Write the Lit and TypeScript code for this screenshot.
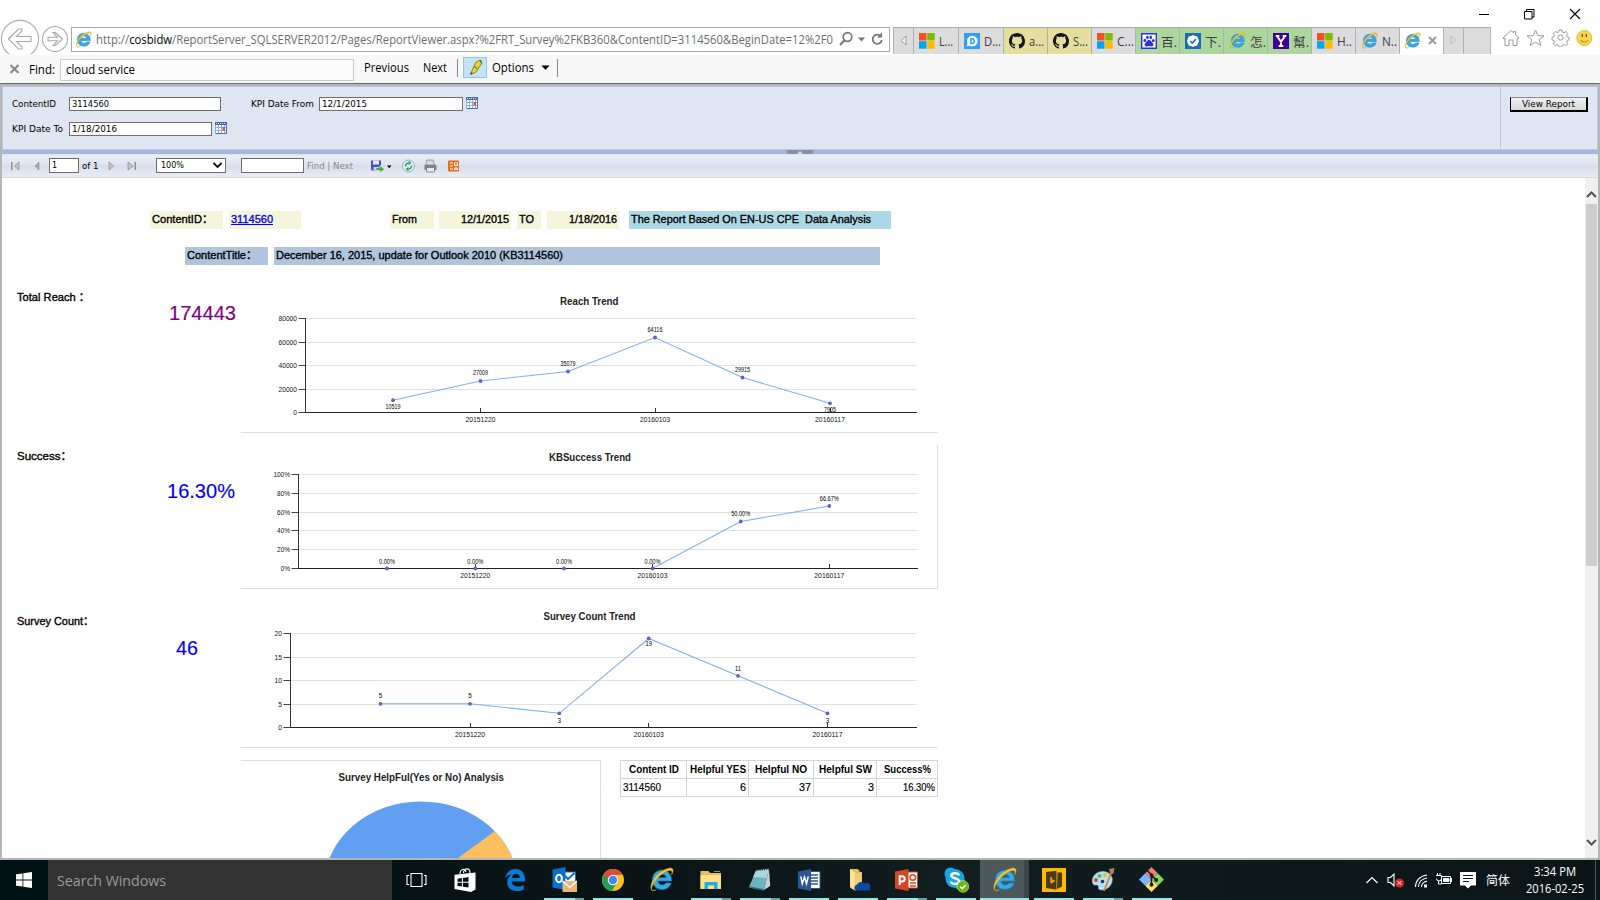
import { LitElement, html, css, svg, nothing } from "lit";
import { customElement, property } from "lit/decorators.js";

/** Single line of text squeezed or stretched to an exact width. */
@customElement("fit-text")
class FitText extends LitElement {
  @property({ type: Number }) w = 0;
  static styles = css`
    :host { display: inline-block; white-space: pre; flex: none; }
    .in { display: inline-block; transform-origin: left center; text-decoration: inherit; }
  `;
  firstUpdated() {
    const s = this.renderRoot.querySelector(".in") as HTMLElement;
    const real = s.getBoundingClientRect().width;
    this.style.width = this.w + "px";
    if (real) s.style.transform = `scaleX(${this.w / real})`;
  }
  render() { return html`<span class="in"><slot></slot></span>`; }
}

const T = (text: unknown, w: number, cls = "") => html`<fit-text class=${cls} .w=${w}>${text}</fit-text>`;

/* ---------- icons ---------- */
const ieGlyph = (s: number) => html`<svg width=${s} height=${s} viewBox="0 0 24 24">
  <path d="M21.5 13.4H8.6c.2 2.4 1.8 3.9 4.1 3.9 1.7 0 2.8-.6 3.5-1.9h5c-1.200 3.900-4.300 6.100-8.600 6.100-5.600 0-9.300-3.700-9.300-9.100 0-5.500 3.800-9.300 9.200-9.300 5.800 0 9.300 4 9 10.300zM16.500 10.200c-.2-2-1.700-3.300-3.900-3.300-2.100 0-3.600 1.300-3.900 3.300z" fill="#35a8e6" stroke="#1c7fc4" stroke-width=".7"/>
  <path d="M3.300 22.800C-.5 20.500 3 11.500 9.500 6.200 15 1.600 21.500-.6 22.900 2.200c.6 1.300 0 3.300-1.200 5.300.5-1.900.5-3.200-.3-3.800-1.700-1.300-6.800.9-11.200 4.900-5.200 4.700-8.400 10.700-7.400 12.900.5 1.100 2.200 1 4.400.1-1.700 1.200-3.200 1.500-3.900 1.200z" fill="#f8c62a" stroke="#d99f12" stroke-width=".4"/></svg>`;
const msGlyph = html`<svg width="16" height="16"><path fill="#f25022" d="M0 0h7.500v7.500H0z"/><path fill="#7fba00" d="M8.200 0h7.500v7.500H8.200z"/><path fill="#00a4ef" d="M0 8.200h7.500v7.500H0z"/><path fill="#ffb900" d="M8.200 8.200h7.500v7.500H8.200z"/></svg>`;
const ghGlyph = html`<svg width="16" height="16" viewBox="0 0 16 16"><path fill="#151515" d="M8 0C3.580 0 0 3.580 0 8c0 3.540 2.290 6.530 5.470 7.590.4.070.550-.170.550-.380 0-.190-.010-.820-.010-1.490-2.010.370-2.530-.490-2.690-.940-.090-.230-.480-.940-.820-1.130-.280-.150-.680-.520-.010-.530.630-.010 1.080.580 1.230.820.720 1.210 1.870.870 2.330.660.070-.520.280-.870.510-1.070-1.780-.2-3.640-.890-3.640-3.950 0-.870.310-1.590.820-2.150-.080-.2-.360-1.020.080-2.120 0 0 .670-.210 2.200.820.640-.180 1.320-.270 2-.270s1.360.090 2 .270c1.530-1.040 2.200-.820 2.200-.820.440 1.100.160 1.920.080 2.120.510.560.820 1.270.820 2.150 0 3.070-1.870 3.750-3.650 3.950.290.250.540.730.540 1.480 0 1.070-.010 1.930-.010 2.200 0 .210.150.460.550.380A8.010 8.010 0 0 0 16 8c0-4.420-3.580-8-8-8z"/></svg>`;
const disqusGlyph = html`<svg width="16" height="16"><path fill="#2e9fff" d="M0 0h16v16H0z"/><path fill="#fff" d="M8.300 2.800a5.300 5.300 0 1 1-2.600 9.900L2.500 13.300l1-2.900a5.300 5.300 0 0 1 4.800-7.600z"/><path fill="none" stroke="#2e9fff" stroke-width="1.500" d="M6.900 5.800v4.600h1.200a2.300 2.300 0 0 0 0-4.600z"/></svg>`;
const baiduGlyph = html`<svg width="16" height="16"><path fill="#fff" stroke="#2932e1" stroke-width="1.400" d="M.7.7h14.600v14.600H.7z"/><g fill="#2932e1"><ellipse cx="3.800" cy="7.400" rx="1.400" ry="1.700"/><ellipse cx="6.400" cy="4.400" rx="1.300" ry="1.800"/><ellipse cx="9.800" cy="4.400" rx="1.300" ry="1.800"/><ellipse cx="12.300" cy="7.600" rx="1.400" ry="1.700"/><path d="M8 7c1.900 0 2.500 2 3.700 3 1.300 1.200.8 3.400-1 3.400-1 0-1.600-.3-2.700-.3s-1.700.3-2.700.3c-1.800 0-2.300-2.200-1-3.400C5.500 9 6.100 7 8 7z"/></g></svg>`;
const checkGlyph = html`<svg width="16" height="16"><path fill="#1d6fb5" d="M0 0h16v16H0z"/><path fill="#fff" d="M8 2l1.800 1.100 2.100.1 1 1.900L14 8l-1.100 2.900-1 1.900-2.100.1L8 14l-1.800-1.100-2.100-.1-1-1.900L2 8l1.100-2.900 1-1.900 2.100-.1z"/><path d="M5.200 8l2.100 2.100 3.700-4" fill="none" stroke="#1d6fb5" stroke-width="1.700"/></svg>`;
const yahooGlyph = html`<svg width="16" height="16"><path fill="#3f0099" d="M0 0h16v16H0z"/><path fill="none" stroke="#fff" stroke-width="1.900" d="M4 3l4 5.800L12 3M8 8.500V13M2.700 3h3.600M9.700 3h3.600M5.700 13h4.600"/></svg>`;

const calGlyph = html`<svg width="12" height="12"><path fill="#fff" d="M0 0h12v12H0z"/><path fill="#3f6cb8" d="M0 0h12v3H0z"/><path stroke="#8fade0" d="M.5 3v9M3.500 3v8M6.500 3v8M9.500 3v8M1 5.500h10M1 8.500h10"/><path fill="#e0502c" d="M7.500 5h2.500v3.500H7.500z"/><path stroke="#3f6cb8" d="M11.500 2v10M1 11.500h10"/><path stroke="#dfe8f8" stroke-dasharray="1 1" d="M1 1.500h10"/></svg>`;

const TABS: { w: number; c: string; icon: unknown; t: string; tw: number }[] = [
  { w: 45.400, c: "gray", icon: msGlyph, t: "L...", tw: 14 },
  { w: 44.800, c: "gray", icon: disqusGlyph, t: "D...", tw: 17 },
  { w: 44.100, c: "gold", icon: ghGlyph, t: "a...", tw: 15 },
  { w: 44.100, c: "gold", icon: ghGlyph, t: "S...", tw: 15 },
  { w: 44.100, c: "gray", icon: msGlyph, t: "C...", tw: 17 },
  { w: 44, c: "green", icon: baiduGlyph, t: "百.", tw: 16 },
  { w: 43.900, c: "green", icon: checkGlyph, t: "下.", tw: 16 },
  { w: 44, c: "green", icon: ieGlyph(17), t: "怎.", tw: 16 },
  { w: 44, c: "green", icon: yahooGlyph, t: "幫.", tw: 16 },
  { w: 44, c: "gray", icon: msGlyph, t: "H..", tw: 15 },
  { w: 43.500, c: "gray", icon: ieGlyph(17), t: "N..", tw: 15 },
];

/* ---------- line chart ---------- */
interface ChartSpec {
  y0: number; h: number; title: string; tx: number; tw: number; ty: number;
  ax: number; top: number; bottom: number; right: number;
  yl: string[]; yw: number; pts: [number, number][];
  lab: [string, number, number][]; side?: boolean;
}
const DATES = ["20151220", "20160103", "20160117"];

@customElement("trend-chart")
class TrendChart extends LitElement {
  @property({ attribute: false }) spec!: ChartSpec;
  static styles = css`
    :host { display: block; flex: none; -webkit-text-stroke: 0; }
    svg { display: block; font-family: "Liberation Sans", Arial, sans-serif; font-weight: normal; }
    .title { font-size: 10.5px; font-weight: bold; fill: #222; }
    .ax { font-size: 7.5px; fill: #111; }
    .lb { font-size: 6.5px; fill: #000; }
  `;
  render() {
    const s = this.spec;
    const n = s.yl.length - 1;
    const by = s.y0 + s.h - 0.5;
    return html`<svg width="697" height=${s.h} viewBox=${`241 ${s.y0} 697 ${s.h}`}>
      <path d=${`M241 ${by}H937.500${s.side ? `V${s.y0}` : ""}`} fill="none" stroke="#dedede"/>
      <text class="title" x=${s.tx} y=${s.ty + 3.200} textLength=${s.tw} lengthAdjust="spacingAndGlyphs">${s.title}</text>
      ${s.yl.map((l, i) => {
        const y = Math.round(s.top + ((s.bottom - s.top) * i) / n) + 0.5;
        const w = l.length * s.yw + (l.endsWith("%") ? 1.800 : 0);
        return svg`${i < n ? svg`<path d=${`M${s.ax} ${y}H${s.right}`} stroke="#e2e2e2"/>` : nothing}
          <path d=${`M${s.ax - 7} ${y}H${s.ax}`} stroke="#444"/>
          <text class="ax" x=${s.ax - 8.500 - w} y=${y + 2.200} textLength=${w} lengthAdjust="spacingAndGlyphs">${l}</text>`;
      })}
      <path d=${`M${s.ax} ${Math.round(s.top)}V${Math.round(s.bottom) + 1}`} stroke="#333"/>
      <polyline points=${s.pts.map((p) => p.join(",")).join(" ")} fill="none" stroke="#7db1f5" stroke-width="1.100"/>
      <path d=${`M${s.ax} ${Math.round(s.bottom) + 0.500}H${s.right}`} stroke="#222"/>
      ${DATES.map((d, i) => {
        const x = s.pts[i * 2 + 1][0];
        return svg`<path d=${`M${Math.floor(x) + 0.500} ${s.bottom - 4}v4`} stroke="#333"/>
          <text class="ax" x=${x - 15} y=${s.bottom + 10.400} textLength="30" lengthAdjust="spacingAndGlyphs">${d}</text>`;
      })}
      ${s.pts.map((p) => svg`<circle cx=${p[0]} cy=${p[1]} r="1.900" fill="#6a5acd"/>`)}
      ${s.lab.map(([t, y, w], i) => svg`<text class="lb" x=${s.pts[i][0] - w / 2} y=${y + 2.200} textLength=${w} lengthAdjust="spacingAndGlyphs">${t}</text>`)}
    </svg>`;
  }
}

const REACH: ChartSpec = {
  y0: 265, h: 168, title: "Reach Trend", tx: 560, tw: 58.500, ty: 301.500,
  ax: 305.500, top: 318, bottom: 412, right: 917,
  yl: ["80000", "60000", "40000", "20000", "0"], yw: 3.700,
  pts: [[393, 400.200], [480.500, 381], [568, 371.500], [655, 337.500], [742.500, 377.500], [830, 403.300]],
  lab: [["10519", 407, 15], ["27009", 373, 15], ["35079", 364, 15], ["64116", 329.500, 15], ["29915", 370, 15], ["7905", 410, 12]],
};
const SUCCESS: ChartSpec = {
  y0: 445, h: 144, title: "KBSuccess Trend", tx: 549, tw: 82, ty: 457.500,
  ax: 298.500, top: 474, bottom: 568, right: 918, side: true,
  yl: ["100%", "80%", "60%", "40%", "20%", "0%"], yw: 3.700,
  pts: [[387, 568.500], [475.300, 568.500], [564, 568.500], [652.500, 568.500], [740.700, 521.500], [829.300, 506]],
  lab: [["0.00%", 561.500, 16], ["0.00%", 561.500, 16], ["0.00%", 561.500, 16], ["0.00%", 561.500, 16], ["50.00%", 514, 19], ["66.67%", 498.500, 19]],
};
const COUNT: ChartSpec = {
  y0: 600, h: 148, title: "Survey Count Trend", tx: 543.500, tw: 92, ty: 616.500,
  ax: 290.500, top: 633, bottom: 727, right: 917,
  yl: ["20", "15", "10", "5", "0"], yw: 3.700,
  pts: [[380.500, 703.800], [470, 703.800], [559.300, 713.300], [648.700, 638.500], [738, 675.800], [827.500, 713.300]],
  lab: [["5", 696, 3.500], ["5", 696, 3.500], ["3", 720.500, 3.500], ["19", 644, 6.500], ["11", 668.500, 6], ["3", 721, 3.500]],
};

/* ---------- taskbar ---------- */
const g = (body: unknown, s = 24) => html`<svg width=${s} height=${s} viewBox="0 0 24 24">${body}</svg>`;
const winPath = "M0 2.300L6.500 1.400V7.600H0zM7.300 1.300L16 0V7.600H7.300zM0 8.400H6.500V14.600L0 13.700zM7.300 8.400H16V16L7.300 14.700z";
const APPS: { i: unknown; u?: string; active?: boolean }[] = [
  { i: g(svg`<path d="M6 5.500h11v13h-11zM4 7.500h-2v9h2M19 7.500h2v9h-2" fill="none" stroke="#fff" stroke-width="1.100"/>`) },
  { i: g(svg`<path d="M6 6C6 1 11-.5 12 4M9.500 5C10-.5 16-.5 16 5" fill="none" stroke="#fff" stroke-width="1.100"/><path d="M.5 6.700L21.500 4.500V21.500L17 24 .5 21z" fill="#fff"/><path d="M3.500 10.700l4.400-.7v3.800H3.500zM8.900 9.900l5.600-.8v4.700H8.900zM3.500 14.800h4.400v3.800l-4.400-.6zM8.900 14.800h5.600v4.700l-5.600-.8z" fill="#071214"/>`) },
  { i: g(svg`<path d="M2 10.800C2.700 5 7 1 12.400 1 18.600 1 22 5.600 22 11.300v2.300H8.800c.2 3.500 2.900 5 6 5 2.200 0 4.200-.6 5.900-1.700v4.600c-1.900 1-4.200 1.500-6.900 1.500-5.700 0-9.600-3.400-9.600-8.600 0-3.300 1.700-6.200 4.500-7.800C5 6.800 3.300 8.400 2 10.800zM8.900 9.900h8c-.1-2.600-1.600-4-3.900-4-2.100 0-3.700 1.500-4.100 4z" fill="#0a79d8"/>`) },
  { u: "multi", i: html`<svg width="27" height="26" viewBox="-2.500 0 27 26"><path d="M9 5h14v12H9z" fill="#fff" stroke="#0f6cbd"/><path d="M11.500 8l4 4 6.500-6" fill="none" stroke="#0f6cbd" stroke-width="2"/><path d="M0 2.500L13 0v23L0 20.500z" fill="#0a70c8"/><ellipse cx="6.500" cy="11.500" rx="2.900" ry="3.700" fill="none" stroke="#fff" stroke-width="2"/><path d="M10 14h14.500v11H10z" fill="#e9b878"/><path d="M10 14l7.200 6.500L24.500 14" fill="none" stroke="#fff" stroke-width="1.300"/></svg>` },
  { u: "one", i: g(svg`<circle cx="12" cy="12" r="11" fill="#fbc116"/><path d="M12 12L2.500 6.500A11 11 0 0 1 21.600 6.700L12 7z" fill="#dd4b3e"/><path d="M2.500 6.500A11 11 0 0 0 11 23l5-8.500L8 15z" fill="#2a9d55"/><path d="M2.500 6.500L8 15l4-8z" fill="#dd4b3e"/><path d="M2.500 6.500l5.200 8.800 2 .5-3-6z" fill="#2a9d55"/><circle cx="12" cy="12" r="5.200" fill="#fff"/><circle cx="12" cy="12" r="4.200" fill="#4486f4"/>`) },
  { i: ieGlyph(25) },
  { u: "multi", i: g(svg`<path d="M1.500 3h8l1.500 2h11v16h-20.500z" fill="#e8c052"/><path d="M1.500 7h20.500v14h-20.500z" fill="#ffe08a"/><path d="M5.500 21v-7h13v7h-3.500v-3.500h-6V21z" fill="#20aee8"/><path d="M15 3.500h6" stroke="#49a0dd"/>`) },
  { u: "multi", i: g(svg`<path d="M8 2.500L21 1 16 22 1 19z" fill="#6fb2bf"/><path d="M8 2.500L21 1 18.500 10 5 9z" fill="#a9d6dd"/><path d="M21 1l1.200 17L16 22z" fill="#c9d2d3"/><path d="M8 2.500L21 1" stroke="#3f5b60" stroke-width="1.600" stroke-dasharray="1 1"/><path d="M1 19l15 3" stroke="#356a75" stroke-width="1.300"/>`) },
  { u: "one", i: g(svg`<path d="M12 3.500h11v17H12z" fill="#fff" stroke="#2b579a"/><path d="M14 7h7M14 10h7M14 13h7M14 16h7" stroke="#2b579a" stroke-width="1.300"/><path d="M1 3.500L14 1v22L1 20.500z" fill="#2b579a"/><path d="M3.800 8.500l1.500 7.200L7.500 9l2 6.700L11.300 8.500" fill="none" stroke="#fff" stroke-width="1.500"/>`) },
  { u: "one", i: g(svg`<path d="M4 1h8l2 3h2v17H6L4 19z" fill="#e3bc56"/><path d="M4 1l5.500 4v18L4 19z" fill="#fbe39a"/><path d="M9.500 5h6v16h-6z" fill="#efd077"/><path d="M9.500 22.500a3.500 3.500 0 0 1 1.500-6 4.500 4.500 0 0 1 7.500-1 4 4 0 0 1 4.500 7z" fill="#0c4a9c"/>`) },
  { u: "multi", i: g(svg`<path d="M12 4h10.500v16H12z" fill="#fff" stroke="#d24726"/><path d="M15 15h6M15 18h6" stroke="#d24726" stroke-width="1.300"/><circle cx="17.800" cy="9.500" r="2.800" fill="none" stroke="#d24726" stroke-width="1.500"/><path d="M0 3.500L13.500 1v22L0 20.500z" fill="#d24726"/><path d="M4.700 17V8.200h2.500a2.400 2.400 0 0 1 0 5.200H4.700" fill="none" stroke="#fff" stroke-width="2"/>`) },
  { u: "one", i: html`<svg width="26" height="26" viewBox="-1 0 26 26"><circle cx="6.500" cy="6.500" r="6" fill="#14a8e8"/><circle cx="15.500" cy="16.500" r="6" fill="#14a8e8"/><circle cx="11" cy="11.500" r="9.500" fill="#14a8e8"/><path d="M15 8.300C14 5.500 7.300 5.300 7.300 8.600c0 3.600 7.900 1.900 7.900 5.700 0 3.700-7.500 3.400-8.500.2" fill="none" stroke="#fff" stroke-width="2.500"/><circle cx="19" cy="19.500" r="5.800" fill="#6bb700" stroke="#d8efc0" stroke-width=".6"/><path d="M16.300 19.600l2 2 3.400-3.700" fill="none" stroke="#fff" stroke-width="1.500"/></svg>` },
  { u: "full", active: true, i: ieGlyph(25) },
  { u: "one", i: g(svg`<path d="M0 0h24v24H0z" fill="#ffb900"/><path d="M4 4l10.500-1.300v19L4 20z" fill="#4a3a1a"/><path d="M15.500 4.500h4.500v14l-5 2.500z" fill="#4a3a1a"/><path d="M9 9v6M9 11.500l3 1.500-3 2" fill="none" stroke="#ffb900" stroke-width="1.300"/>`) },
  { u: "multi", i: g(svg`<path d="M2 16C-1 9 6 2.500 13 3.500c8 1 10 8 7 13-2 3.500-5 5-9 5.500-2.500.2-4-1-3.500-2.500.5-2-1-2.700-2.500-2.500-1.500.2-2.500 0-3-1z" fill="#b9dff2" stroke="#7fb2d0" stroke-width=".6"/><circle cx="5" cy="12" r="1.900" fill="#e23b30"/><circle cx="8.500" cy="8" r="2" fill="#64b443"/><circle cx="14" cy="7" r="2" fill="#f4b92d"/><circle cx="11.500" cy="13.500" r="1.800" fill="#103a66"/><path d="M20.500 4L13 23" stroke="#d9823a" stroke-width="1.700"/><path d="M18 1l5.500-1-1 5.500-3 1z" fill="#b58354"/>`) },
  { u: "one", i: g(svg`<path d="M12 0l6 6-6 6-6-6z" fill="#f27d7d"/><path d="M6 6l6 6-6 6-6-6z" fill="#80b2ff"/><path d="M18 6l6 6-6 6-6-6z" fill="#85d45c"/><path d="M12 12l6 6-6 6-6-6z" fill="#ffe26b"/><path d="M8 3.500l4 4v10M12 8l4.500 4.500" stroke="#1a1a1a" stroke-width="1.500" fill="none"/><circle cx="12" cy="7.700" r="1.800" fill="#1a1a1a"/><circle cx="16.500" cy="12.500" r="1.900" fill="#1a1a1a"/><circle cx="12" cy="17" r="1.900" fill="#1a1a1a"/>`, 25) },
];

@customElement("app-root")
class AppRoot extends LitElement {
  static styles = css`
    * { box-sizing: border-box; }
    :host { display: flex; flex-direction: column; width: 1600px; height: 900px; overflow: hidden; background: #fff;
      font-family: "Open Sans", "Noto Sans CJK SC", sans-serif; color: #000; }
    svg { display: block; flex: none; }
    .wctl { height: 27px; display: flex; justify-content: flex-end; align-items: flex-start; padding: 8px 19px 0 0; gap: 34px; flex: none; }
    .nav { height: 28px; display: flex; align-items: flex-start; flex: none; }
    .btns { width: 71px; height: 27px; position: relative; overflow: visible; }
    .btns svg { position: absolute; left: 0; top: -8px; }
    .addr { width: 819px; height: 25px; border: 1px solid #aaa; display: flex; align-items: center; padding-left: 3px; font-size: 13px; line-height: 18px; color: #6d6d6d; }
    .addr fit-text { margin-left: 4px; margin-top: -2px; }
    .addr > svg { margin-top: -1px; }
    .addr b { font-weight: 400; color: #000; }
    .addr .tools { margin-left: 6px; }
    .tabs { display: flex; margin-left: 3px; height: 27px; border-top: 1px solid #aaa; border-right: 1px solid #b5b5b5; font-size: 12.5px; color: #3c3c3c; }
    .tab { border-left: 1px solid #b0b0b0; background: #dcdcdc; display: flex; align-items: center; padding-left: 4.500px; gap: 4.500px; flex: none; }
    .gold { background: #e4dd9d; } .green { background: #abd69c; } .act { background: #fff; gap: 7px; }
    .arr { padding-left: 6px; }
    .tab > svg { margin-top: -1px; }
    .tab.s1 { width: 20px; } .tab.s2 { width: 44px; } .tab.s3 { width: 20px; } .tab.s4 { width: 27px; }
    .navicons { margin: 2px 0 0 11px; }
    .find { height: 28px; background: #f7f7f7; display: flex; align-items: center; font-size: 12px; flex: none; padding-left: 9px; }
    .fin { width: 294px; height: 22px; border: 1px solid #ccc; background: #fcfcfc; margin-left: 5px; padding: 1px 0 0 5px; line-height: 18px; margin-top: 1px; }
    .ml11 { margin-left: 10px; } .ml9 { margin-left: 9px; } .ml14 { margin-left: 14px; } .ml7 { margin-left: 7px; } .up { margin-top: -3px; }
    .vs { width: 1px; height: 18px; background: #888; }
    .hl { width: 24px; height: 21px; border: 1px solid #8cc6f2; background: #c6e2f7; margin: -3px 5px 0 5px; display: flex; justify-content: center; align-items: center; }
    .frame { flex: 1; min-height: 0; display: flex; flex-direction: column; border: 2px solid #b5b5b5; border-top: 0; }
    .l1 { height: 1px; background: #6e6e6e; margin: 0 -2px; flex: none; } .l2 { height: 2px; background: #b5b5b5; flex: none; }
    .params { height: 64px; background: #dfe6f2; border: 1px solid #b8cbe6; display: flex; font-family: "DejaVu Sans", sans-serif; font-size: 8px; flex: none; }
    .pl { flex: 1; padding: 10px 0 0 9px; display: flex; flex-direction: column; gap: 10px; border-right: 1px solid #b8cbe6; }
    .pr { width: 96px; padding: 10px 0 0 9px; }
    .prow { display: flex; align-items: flex-start; height: 14px; }
    .prow.two { padding-top: 1px; }
    .prow > fit-text { line-height: 15px; }
    .pin { height: 14px; border: 1px solid #6e6e6e; background: #fff; line-height: 13px; padding-left: 2px; flex: none; }
    .p1 { width: 152px; margin-left: 13px; } .p2 { width: 144px; margin-left: 5px; } .p3 { width: 143px; margin-left: 6px; }
    .cal { margin-left: 3px; } .kf { margin-left: 30px; }
    .vbtn { width: 78px; height: 15px; border: 1px solid #8c8c8c; border-right: 2px solid #000; border-bottom: 2px solid #000; border-left-color: #000; background: linear-gradient(#f0f0f0, #d8d8d8); display: flex; justify-content: center; align-items: center; line-height: 11px; }
    .split { height: 4px; background: #a5b6d9; display: flex; justify-content: center; flex: none; }
    .grip { width: 26px; height: 4px; background: #8791a3; display: flex; justify-content: center; align-items: center; }
    .tb { height: 24px; border-top: 1px solid #dfe5f1; border-bottom: 1px solid #d5d8e0; background: linear-gradient(#eaedf7, #dfe4f0 45%, #d7ddeb 46%, #e9ecf6); display: flex; align-items: center; font-family: "DejaVu Sans", sans-serif; font-size: 8px; padding-left: 9px; flex: none; }
    .tb > svg { margin-top: -1px; }
    .tin { height: 15px; border: 1px solid #6e6e6e; background: #fff; line-height: 14px; flex: none; padding-left: 2px; margin-top: -1px; }
    .i1 { width: 30px; margin-left: 9px; } .i2 { width: 63px; margin-left: 15px; }
    .sel { width: 70px; margin-left: 18.500px; display: flex; align-items: center; justify-content: space-between; padding: 0 2px 0 4px; }
    .of { margin-left: 3px; } .gray { color: #888; } .tab.gray { color: inherit; }
    .fn { margin-left: 3px; }
    .body { flex: 1; min-height: 0; display: flex; }
    .rep { flex: 1; min-width: 0; overflow: hidden; display: flex; flex-direction: column; font-family: "Liberation Sans", "Noto Sans CJK SC", Arial, sans-serif; font-size: 11px; color: #000; -webkit-text-stroke: .35px; }
    .sb { width: 13px; background: #f0f0f0; display: flex; flex-direction: column; align-items: center; padding: 13px 0 12px; justify-content: space-between; flex: none; }
    .thumb { width: 11px; height: 362px; background: #cdcdcd; margin-top: 6px; margin-bottom: auto; }
    .r { display: flex; height: 18px; flex: none; }
    .r1 { margin: 33px 0 0 148px; } .r2 { margin: 18px 0 0 183px; }
    .cell { line-height: 17px; padding: 0 2px; background: #f5f5dc; display: flex; flex: none; white-space: nowrap; }
    .end { justify-content: flex-end; } .lb { background: #add8e6; } .st { background: #b0c4de; }
    .link { color: #00f; }
    .u1 { text-decoration: underline; }
    .c73 { width: 73px; } .c72 { width: 72px; margin-left: 6px; } .cf { width: 44px; margin-left: 89px; } .cd { width: 72px; margin-left: 5px; }
    .ct { width: 24px; margin-left: 6px; } .cd2 { width: 72px; margin-left: 6px; } .cr { width: 262px; margin-left: 10px; }
    .c83 { width: 83px; } .c606 { width: 606px; margin-left: 6px; }
    .sec { display: flex; flex: none; } .sec.b { margin-top: 12px; } .sec.c { margin-top: 11px; }
    .lab { width: 150px; padding-left: 15px; flex: none; line-height: 14px; }
    .num { width: 89px; flex: none; font-size: 21px; color: #00f; line-height: 24px; -webkit-text-stroke: .15px; }
    .purple { color: purple; }
    .o1 .lab { padding-top: 25px; } .o1 .num { padding: 36px 0 0 17px; }
    .o2 .lab { padding-top: 4px; } .o2 .num { padding: 34px 0 0 15px; }
    .o3 .lab { padding-top: 14px; } .o3 .num { padding: 36px 0 0 24px; }
    .last { display: flex; margin: 12px 0 0 239px; flex: none; }
    .pie { width: 360px; height: 120px; border: 1px solid #dedede; border-width: 1px 1px 0 0; -webkit-text-stroke: 0; }
    .pt { font-size: 10.500px; font-weight: bold; fill: #222; }
    .grid { margin-left: 19px; width: 318px; height: 37px; display: grid; grid-template-columns: 66px 62px 65px 63px 61px; grid-template-rows: 18px 18px; border: solid #d3d3d3; border-width: 1px 0 0 1px; font-size: 10px; line-height: 17px; font-weight: bold; -webkit-text-stroke: 0; }
    .gc { border: solid #d3d3d3; border-width: 0 1px 1px 0; display: flex; justify-content: center; }
    .gv { font-weight: normal; justify-content: flex-end; padding: 0 2px; -webkit-text-stroke: .15px; } .gl { justify-content: flex-start; }
    .task { height: 40px; flex: none; background: linear-gradient(90deg, #001114, #0a1416 40%, #111d1f 60%, #0b1517); display: flex; color: #fff; }
    .start { width: 48px; display: flex; align-items: center; justify-content: center; }
    .srch { width: 344px; background: #333; color: #9b9b9b; font-size: 15px; display: flex; align-items: center; padding-left: 9px; }
    .app { width: 49px; height: 40px; display: grid; grid-template-rows: 38px 2px; justify-items: center; align-items: center; flex: none; }
    .app > svg { margin-top: 1px; }
    .app.on { background: linear-gradient(90deg, #4d585a 44px, #39474a 44px); }
    .u { height: 2px; width: 40px; background: #91e8dc; } .u.multi { background: linear-gradient(90deg, #91e8dc 31px, #5fa59d 31px); } .u.full { width: 49px; }
    .tray { flex: 1; display: flex; align-items: center; justify-content: flex-end; padding-right: 4px; }
    .lang { font-size: 12px; margin-left: 9px; margin-top: -1px; }
    .clock { width: 58px; margin-left: 16px; display: flex; flex-direction: column; align-items: center; font-size: 12px; line-height: 17px; margin-top: -1px; }
    .eol { width: 1px; height: 40px; background: #4d5a5c; margin-left: 11px; }
  `;

  nav() {
    return html`
    <div class="wctl">
      <svg width="12" height="12"><path d="M2 6.500h10" stroke="#000"/></svg>
      <svg width="12" height="12"><path d="M1.500 3.500h7.500v7.500H1.500zM3.500 3.500v-2h7.500v7.500H9" fill="none" stroke="#000"/></svg>
      <svg width="12" height="12"><path d="M1 1l10 10M11 1L1 11" stroke="#000" stroke-width="1.100"/></svg>
    </div>
    <div class="nav">
      <div class="btns"><svg width="71" height="35" viewBox="0 19 71 35" fill="none" stroke="#a9a9a9" stroke-width="1.100">
        <circle cx="20" cy="39" r="18.600"/><circle cx="55" cy="39" r="12.500"/>
        <path d="M8.500 39L18.500 29l3.500 0v2l-5.500 5.500H31v5H16.500L22 47v2h-3.500z"/>
        <path d="M62.500 39L55.500 32.500h-2.500l4.500 4.800H48v3.500h9.500L53 45.500h2.500z"/></svg></div>
      <div class="addr">${ieGlyph(17)}${T(html`http://<b>cosbidw</b>/ReportServer_SQLSERVER2012/Pages/ReportViewer.aspx?%2FRT_Survey%2FKB360&amp;ContentID=3114560&amp;BeginDate=12%2F0`, 737)}
        <svg class="tools" width="46" height="16" fill="none" stroke="#777"><circle cx="8.500" cy="6" r="4.300" stroke-width="1.700"/><path d="M5.500 9.200L1 14" stroke-width="2"/><path d="M19 6.500h7l-3.500 4z" fill="#777" stroke="none"/><path d="M41.800 5.300A4.600 4.600 0 1 0 42.800 9" stroke-width="1.800"/><path d="M43 1.500v5h-5z" fill="#777" stroke="none"/></svg>
      </div>
      <div class="tabs">
        <div class="tab arr s1"><svg width="7" height="11"><path d="M6 1v9L1 5.500z" fill="#f4f4f4" stroke="#999"/></svg></div>
        ${TABS.map((t) => html`<div class="tab ${t.c}" style="width:${t.w}px">${t.icon}${T(t.t, t.tw)}</div>`)}
        <div class="tab act s2">${ieGlyph(17)}<svg width="9" height="9"><path d="M1 1l7 7M8 1L1 8" stroke="#999" stroke-width="2"/></svg></div>
        <div class="tab arr s3"><svg width="7" height="11"><path d="M1 1v8l4.500-4z" fill="#e8e8e8" stroke="#b0b0b0"/></svg></div>
        <div class="tab s4"></div>
      </div>
      <svg class="navicons" width="94" height="18" fill="none" stroke="#9a9a9a">
        <path d="M1 9L9 1.500l2.500 2.400V2.500h2v3.300L17 9l-1.200 1L15 9.300V16.500h-4V11H7v5.500H3V9.300l-.8.7z"/>
        <path d="M33.500 1l2.300 5.600 6.200.3-4.800 3.800 1.700 5.800-5.400-3.400-5.400 3.400 1.700-5.800L25 6.900l6.200-.3z"/>
        <circle cx="58.500" cy="8.500" r="2.600"/><path d="M57 1h3l.4 2 1.600.7 1.800-1.200 2 2-1.200 1.800.7 1.600 1.700.4v2.700l-1.700.4-.7 1.600 1.200 1.800-2 2-1.800-1.200-1.600.7-.4 1.700h-3l-.4-1.700-1.600-.7-1.800 1.200-2-2 1.200-1.800-.7-1.600-1.700-.4V8.300l1.700-.4.7-1.600-1.200-1.800 2-2L56 3.700l.6-.7z"/>
        <circle cx="82.300" cy="9" r="7.500" fill="#fbd64a" stroke="#e3bb3d"/><path d="M80.300 5v3M84.300 5v3" stroke="#5a4a10" stroke-width="1.300"/><path d="M78.300 11c2 2.700 6 2.700 8 0" stroke="#a08020"/>
      </svg>
    </div>
    <div class="find">
      <svg width="11" height="10"><path d="M1.500 1l8 8M9.500 1l-8 8" stroke="#8a8a8a" stroke-width="2.200"/></svg>
      <span class="ml9">${T("Find:", 26)}</span>
      <div class="fin">${T("cloud service", 69)}</div>
      <span class="ml11 up">${T("Previous", 45)}</span><span class="ml14 up">${T("Next", 24)}</span>
      <span class="vs ml11 up"></span>
      <div class="hl"><svg width="16" height="17"><path d="M9 3l4.500-2 1.500 3L9 13l-4.500 2.500.5-4z" fill="#e6d629" stroke="#75702a" stroke-width=".8"/><path d="M7 7.500l3.500 2" stroke="#555"/><path d="M4.500 12L2.500 16l3-1.500z" fill="#555"/><path d="M13 1l1.500 3" stroke="#44803e" stroke-width="1.500"/></svg></div>
      <span class="up">${T("Options", 42)}</span>
      <svg class="up ml7" width="9" height="6"><path d="M.5.500h8l-4 4.500z"/></svg>
      <span class="vs ml7 up"></span>
    </div>`;
  }

  params() {
    return html`
    <div class="params">
      <div class="pl">
        <div class="prow">${T("ContentID", 44)}<div class="pin p1">${T("3114560", 37)}</div><span class="kf"></span>${T("KPI Date From", 63)}<div class="pin p2">${T("12/1/2015", 45)}</div><span class="cal">${calGlyph}</span></div>
        <div class="prow two">${T("KPI Date To", 51)}<div class="pin p3">${T("1/18/2016", 45)}</div><span class="cal">${calGlyph}</span></div>
      </div>
      <div class="pr"><div class="vbtn">${T("View Report", 53)}</div></div>
    </div>
    <div class="split"><div class="grip"><svg width="6" height="3"><path d="M0 3l3-3 3 3z" fill="#d5dbe6"/></svg></div></div>
    <div class="tb">
      <svg width="29" height="10"><path d="M0 1h1.500v8H0z" fill="#8d8f94"/><path d="M8 1v8L3.500 5z" fill="#c2c5cb" stroke="#8d8f94" stroke-width=".8"/><path d="M28 1v8l-4-4z" fill="#9fa2a8" stroke="#8d8f94" stroke-width=".6"/></svg>
      <div class="tin i1">1</div><span class="of">${T("of 1", 16.500)}</span>
      <svg width="39" height="10"><path d="M10 1v8l4.500-4z" fill="#c2c5cb" stroke="#8d8f94" stroke-width=".8"/><path d="M29 1v8l5-4z" fill="#c2c5cb" stroke="#8d8f94" stroke-width=".8"/><path d="M35.500 1H37v8h-1.500z" fill="#8d8f94"/></svg>
      <div class="tin sel">${T("100%", 23)}<svg width="11" height="7"><path d="M1.500 1l4 4 4-4" fill="none" stroke="#111" stroke-width="1.800"/></svg></div>
      <div class="tin i2"></div>
      <span class="gray fn">${T("Find | Next", 46)}</span>
      <svg width="110" height="14"><path d="M18 1.500h10v10H19l-1-1z" fill="#4a52c0"/><path d="M20 1.500h6v4h-6z" fill="#e7eaff"/><path d="M20.500 8h5v3.500h-5z" fill="#c9cfee"/><path d="M23 8.500h4V6.300l4.500 4-4.500 3.500v-2.300h-4z" fill="#3fae49" stroke="#fff" stroke-width=".5"/><path d="M34 6.500h4.500l-2.250 2.800z"/>
        <circle cx="55.500" cy="7" r="6" fill="#e3effb" stroke="#84b3e0"/><path d="M52.500 7.500A3.200 3.200 0 0 1 55.500 4M58.500 6.500A3.200 3.200 0 0 1 55.500 10" fill="none" stroke="#3a9f3a" stroke-width="1.500"/><path d="M55.500 1.800L58.500 4l-3 2.200zM55.500 12.200L52.500 10l3-2.200z" fill="#3a9f3a"/>
        <path d="M74 1h6l1.500 5h-9z" fill="#d5dae3" stroke="#7d828c" stroke-width=".7"/><path d="M71.500 6h12v5h-12z" fill="#7c828c"/><path d="M73.500 8.500h8V13h-8z" fill="#e4e7ec" stroke="#686d76" stroke-width=".7"/>
        <rect x="95" y="1.500" width="11" height="11" rx="1" fill="#ea6a1a"/><path d="M97 4h3M97 7h3M97 10h3M101.500 4h3v2.500h-3zM101.500 9h3v1.500h-3z" stroke="#fff" fill="none"/></svg>
    </div>`;
  }

  report() {
    return html`
    <div class="rep">
      <div class="r r1">
        <div class="cell c73">${T("ContentID：", 61)}</div><div class="cell c72 link">${T(html`<span class="u1">3114560</span>`, 42)}</div>
        <div class="cell cf">${T("From", 25)}</div><div class="cell cd end">${T("12/1/2015", 48)}</div>
        <div class="cell ct">${T("TO", 15)}</div><div class="cell cd2 end">${T("1/18/2016", 48)}</div>
        <div class="cell lb cr">${T("The Report Based On EN-US CPE  Data Analysis", 240)}</div>
      </div>
      <div class="r r2"><div class="cell st c83">${T("ContentTitle：", 70)}</div><div class="cell st c606">${T("December 16, 2015, update for Outlook 2010 (KB3114560)", 287)}</div></div>
      <div class="sec o1"><div class="lab">${T("Total Reach ：", 73)}</div><div class="num purple">${T("174443", 67)}</div><trend-chart .spec=${REACH}></trend-chart></div>
      <div class="sec b o2"><div class="lab">${T("Success：", 55)}</div><div class="num">${T("16.30%", 68)}</div><trend-chart .spec=${SUCCESS}></trend-chart></div>
      <div class="sec c o3"><div class="lab">${T("Survey Count：", 77)}</div><div class="num">${T("46", 22)}</div><trend-chart .spec=${COUNT}></trend-chart></div>
      <div class="last">
        <div class="pie"><svg width="358" height="98" viewBox="241 761 358 98">
          <text class="pt" x="338.500" y="780.500" textLength="165.500" lengthAdjust="spacingAndGlyphs">Survey HelpFul(Yes or No) Analysis</text>
          <ellipse cx="421" cy="885" rx="96.500" ry="83.500" fill="#619ff2"/>
          <path d="M421 885L494.700 831.300A96.500 83.500 0 0 1 517.500 885z" fill="#fcbf60"/></svg></div>
        <div class="grid">
          <div class="gc">${T("Content ID", 50)}</div><div class="gc">${T("Helpful YES", 56)}</div><div class="gc">${T("Helpful NO", 52)}</div><div class="gc">${T("Helpful SW", 53)}</div><div class="gc">${T("Success%", 47)}</div>
          <div class="gc gv gl">${T("3114560", 38)}</div><div class="gc gv">${T("6", 6)}</div><div class="gc gv">${T("37", 12)}</div><div class="gc gv">${T("3", 6)}</div><div class="gc gv">${T("16.30%", 32)}</div>
        </div>
      </div>
    </div>`;
  }

  render() {
    return html`
    ${this.nav()}
    <div class="frame">
      <div class="l1"></div><div class="l2"></div>
      ${this.params()}
      <div class="body">
        ${this.report()}
        <div class="sb">
          <svg width="11" height="7"><path d="M1 6l4.500-4.500L10 6" fill="none" stroke="#555" stroke-width="2"/></svg>
          <div class="thumb"></div>
          <svg width="11" height="7"><path d="M1 1l4.500 4.500L10 1" fill="none" stroke="#555" stroke-width="2"/></svg>
        </div>
      </div>
    </div>
    <div class="task">
      <div class="start"><svg width="16" height="16"><path d=${winPath} fill="#fff"/></svg></div>
      <div class="srch">${T("Search Windows", 109)}</div>
      ${APPS.map((a) => html`<div class="app ${a.active ? "on" : ""}">${a.i}${a.u ? html`<div class="u ${a.u}"></div>` : nothing}</div>`)}
      <div class="tray">
        <svg width="111" height="20" viewBox="1366 870 111 20" fill="none" stroke="#fff">
          <path d="M1366.500 883l5.500-5.500 5.500 5.500" stroke-width="1.200"/>
          <path d="M1388 877.500h2.500l3.500-3.500v12l-3.500-3.500h-2.500z" stroke-width="1.100"/><circle cx="1399.500" cy="883" r="4.500" fill="#d9252b" stroke="none"/><path d="M1397.700 881.200l3.600 3.600M1401.300 881.200l-3.600 3.600"/>
          <path d="M1415.500 887c0-6 4-11 11.500-12M1418.500 887c0-4.500 3-8 8.500-9M1421.500 887c0-3 2-5 5.500-6" stroke-width="1.100"/><path d="M1424 884.500h3v3h-3z" fill="#fff" stroke="none"/>
          <path d="M1441.500 876.500h9v7h-9z"/><path d="M1443.500 878.500h5.500v3h-5.500z" fill="#fff"/><path d="M1451.500 878v4M1436 875.500h5.500v3a2.500 2.500 0 0 1-5 0M1437.500 873v2M1440 873v2M1438.500 881v3h3"/>
          <path d="M1460 872h16v13.500h-5l-3 3-3-3h-5z" fill="#fff" stroke="none"/><path d="M1463 875.500h10M1463 878.500h10M1463 881.500h6" stroke="#111"/>
        </svg>
        <span class="lang">${T("简体", 24)}</span>
        <div class="clock">${T("3:34 PM", 42)}${T("2016-02-25", 58)}</div>
        <div class="eol"></div>
      </div>
    </div>`;
  }
}
